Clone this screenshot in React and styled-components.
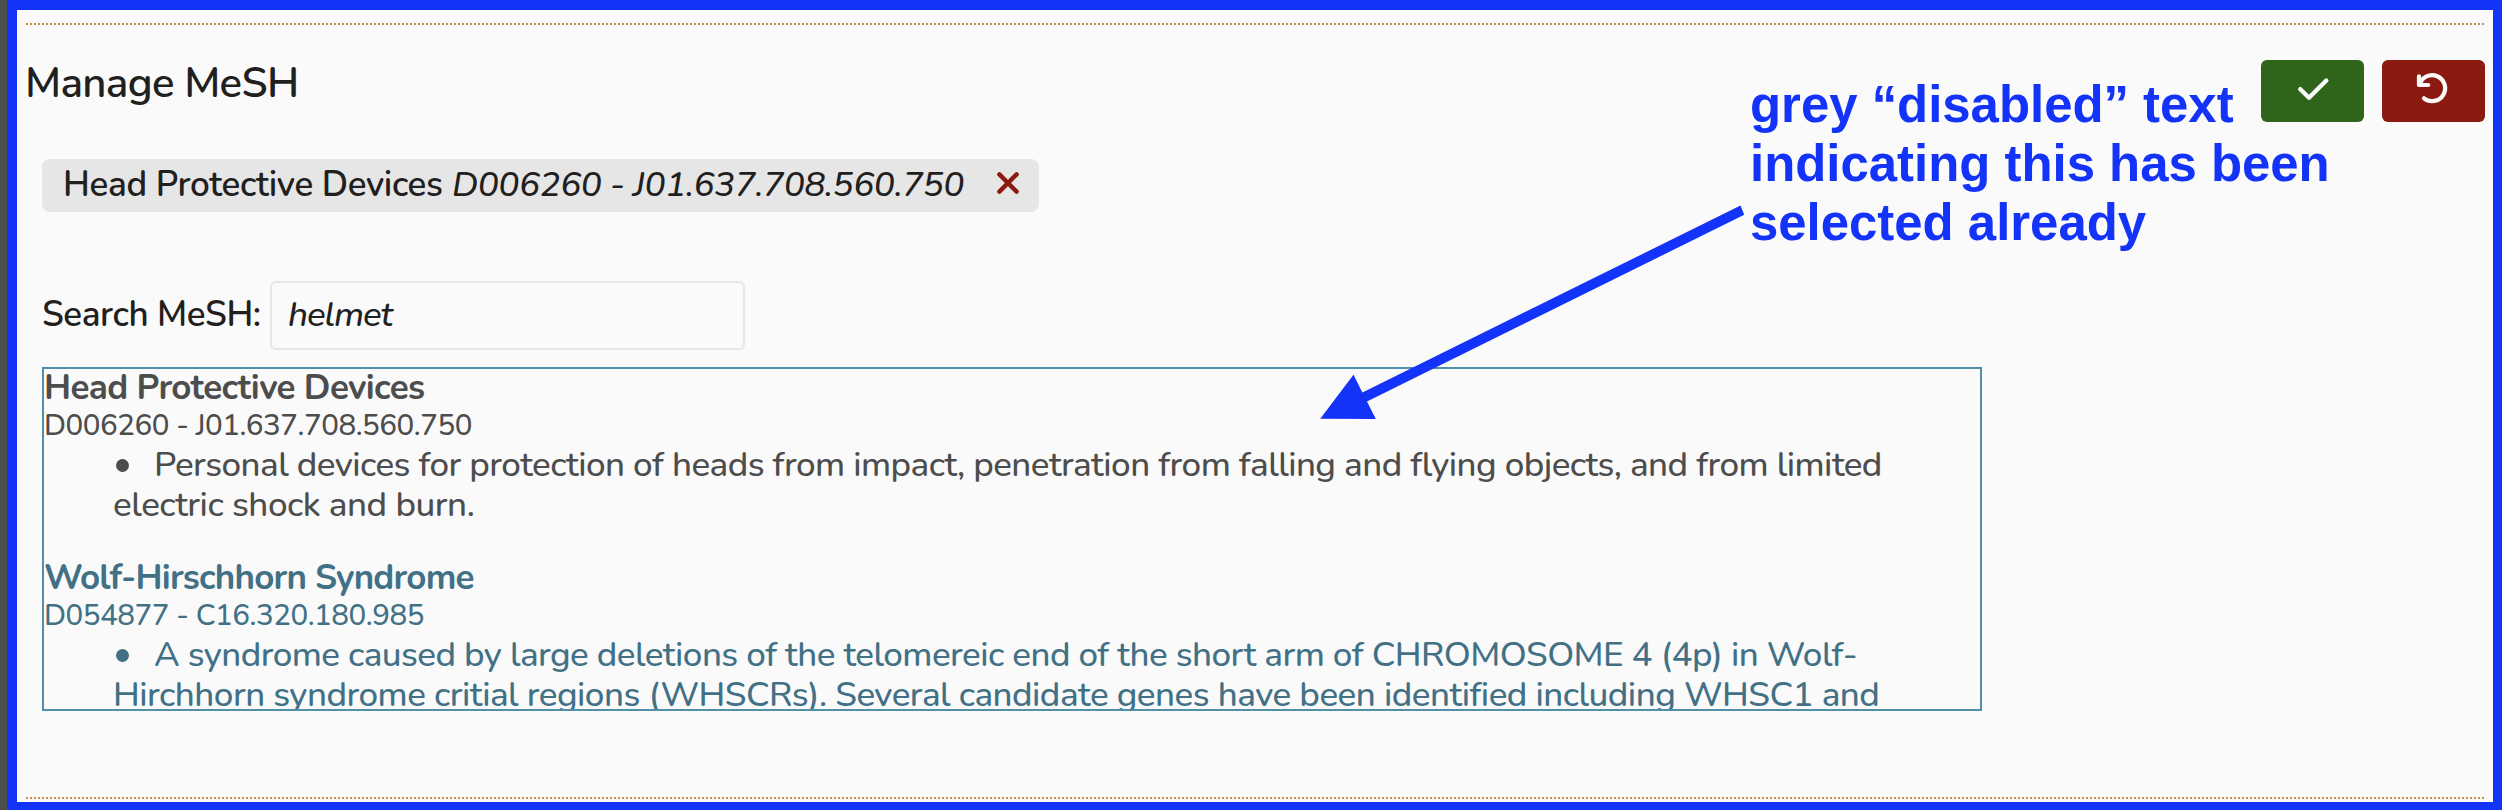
import React from 'react';
import styled, { createGlobalStyle } from 'styled-components';

const BLUE = '#1433f9';

const GlobalStyle = createGlobalStyle`
  * { box-sizing: border-box; }
  body {
    margin: 0;
    background: #4d4d4d;
    color: #221f1f;
    font-family: Nunito, Lato, "Liberation Sans", sans-serif;
    font-size: 35px;
    font-weight: 500;
    overflow: hidden;
  }
`;

const Panel = styled.main`
  position: relative;
  height: 810px;
  margin-left: 7px;
  padding: 13px 8px 0 9px;
  border: solid ${BLUE};
  border-width: 10px 9px 8px 10px;
  background: #fafafa;
`;

const Rule = styled.div`
  height: 2px;
  background: repeating-linear-gradient(90deg, #cb8d4c 0 2px, transparent 2px 4px);
`;

const Header = styled.header`
  display: flex;
  justify-content: space-between;
  align-items: flex-start;
  margin-top: 35px;
`;

const Title = styled.h2`
  margin: 0 0 0 -1px;
  font-size: 42px;
  line-height: 47px;
  font-weight: 600;
  letter-spacing: -0.7px;
`;

const Actions = styled.div`
  display: flex;
  gap: 18px;
`;

const ActionButton = styled.button`
  width: 103px;
  height: 62px;
  padding: 0;
  border: 0;
  border-radius: 6px;
  background: ${(p) => p.$color};

  svg { display: block; }
`;

const Body = styled.section`
  margin: 37px 0 0 16px;
`;

const Chip = styled.div`
  display: flex;
  align-items: center;
  width: 997px;
  height: 53px;
  padding: 0 20px 2px 21px;
  border-radius: 8px;
  background: #e6e6e6;
  white-space: nowrap;
`;

const ChipName = styled.strong`
  width: 389px;
  font-weight: 600;
  letter-spacing: -0.34px;
`;

const ChipCode = styled.em`
  letter-spacing: -0.4px;
`;

const RemoveIcon = styled.svg`
  margin: 0 0 3px auto;
`;

const SearchRow = styled.label`
  display: flex;
  height: 69px;
  margin-top: 69px;
`;

const SearchLabel = styled.span`
  width: 228px;
  padding-top: 11px;
  line-height: 45px;
  font-weight: 600;
  letter-spacing: -0.42px;
  white-space: nowrap;
`;

const SearchInput = styled.input`
  width: 475px;
  padding: 0 16px 2px;
  border: 2px solid #e6e6e6;
  border-radius: 6px;
  outline: 0;
  background: transparent;
  color: inherit;
  font: inherit;
  font-style: italic;
  letter-spacing: -1.1px;
`;

const Results = styled.ul`
  width: 1940px;
  height: 344px;
  margin: 17px 0 86px;
  padding: 0;
  border: 2px solid #528fab;
  overflow: hidden;
  list-style: none;
`;

const Result = styled.li`
  height: 190px;
  color: ${(p) => (p.$disabled ? '#4d4d4d' : '#427186')};
  white-space: nowrap;
`;

const ResultName = styled.div`
  line-height: 37px;
  font-weight: 700;
  letter-spacing: ${(p) => p.$spacing}px;
`;

const ResultCode = styled.div`
  font-size: 29.5px;
  line-height: 38.5px;
  letter-spacing: -0.46px;
`;

const Definition = styled.div`
  margin-left: 69px;
`;

const DefinitionLine = styled.div`
  line-height: 40px;
  letter-spacing: ${(p) => p.$spacing}px;
`;

const Bullet = styled.span`
  display: inline-block;
  width: 13px;
  height: 13px;
  margin: 0 25px 0 3px;
  border-radius: 50%;
  background: currentColor;
  vertical-align: 4px;
`;

const Note = styled.p`
  position: absolute;
  top: 65px;
  left: 1733px;
  margin: 0;
  color: ${BLUE};
  font: bold 50.9px/59px "Liberation Sans", Arial, sans-serif;
  white-space: nowrap;
`;

const Arrow = styled.svg`
  position: absolute;
  top: 190px;
  left: 1293px;
`;

const results = [
  {
    name: 'Head Protective Devices',
    spacing: -0.62,
    code: 'D006260 - J01.637.708.560.750',
    disabled: true,
    lines: [
      ['Personal devices for protection of heads from impact, penetration from falling and flying objects, and from limited', -0.54],
      ['electric shock and burn.', -0.46],
    ],
  },
  {
    name: 'Wolf-Hirschhorn Syndrome',
    spacing: -0.77,
    code: 'D054877 - C16.320.180.985',
    lines: [
      ['A syndrome caused by large deletions of the telomereic end of the short arm of CHROMOSOME 4 (4p) in Wolf-', -0.55],
      ['Hirchhorn syndrome critial regions (WHSCRs). Several candidate genes have been identified including WHSC1 and', -0.51],
    ],
  },
];

export default function App() {
  return (
    <>
      <GlobalStyle />
      <Panel>
        <Rule />
        <Header>
          <Title>Manage MeSH</Title>
          <Actions>
            <ActionButton $color="#2e651a" aria-label="Save">
              <svg width="103" height="62" fill="none" stroke="#fafafa" strokeWidth="4.4" strokeLinecap="round" strokeLinejoin="round">
                <path d="M39.3 29.2 48 37.8 65.3 20.5" />
              </svg>
            </ActionButton>
            <ActionButton $color="#8b1b11" aria-label="Undo">
              <svg width="103" height="62" fill="none" stroke="#fafafa" strokeWidth="4.2" strokeLinecap="round" strokeLinejoin="round">
                <path d="M37 16.3V25h9.2" />
                <path d="M37.6 24.6A13 13 0 1 1 42 38.3" />
              </svg>
            </ActionButton>
          </Actions>
        </Header>
        <Body>
          <Chip>
            <ChipName>Head Protective Devices</ChipName>
            <ChipCode>D006260 - J01.637.708.560.750</ChipCode>
            <RemoveIcon width="22" height="22" fill="none" stroke="#8b1b11" strokeWidth="4.4" strokeLinecap="round">
              <path d="M2.4 2.4 19.6 19.6M19.6 2.4 2.4 19.6" />
            </RemoveIcon>
          </Chip>
          <SearchRow>
            <SearchLabel>Search MeSH:</SearchLabel>
            <SearchInput defaultValue="helmet" spellCheck={false} />
          </SearchRow>
          <Results>
            {results.map((r) => (
              <Result key={r.name} $disabled={r.disabled}>
                <ResultName $spacing={r.spacing}>{r.name}</ResultName>
                <ResultCode>{r.code}</ResultCode>
                <Definition>
                  {r.lines.map(([text, spacing], i) => (
                    <DefinitionLine key={text} $spacing={spacing}>
                      {i === 0 && <Bullet />}
                      {text}
                    </DefinitionLine>
                  ))}
                </Definition>
              </Result>
            ))}
          </Results>
        </Body>
        <Rule />
        <Note>
          grey “disabled” text
          <br />
          indicating this has been
          <br />
          selected already
        </Note>
        <Arrow width="440" height="240" fill={BLUE}>
          <path d="M430.5 5.5 434.2 14.8 57 201.5 65.8 219 10.2 218.8 43.5 174.8 52.4 192.5Z" />
        </Arrow>
      </Panel>
    </>
  );
}
